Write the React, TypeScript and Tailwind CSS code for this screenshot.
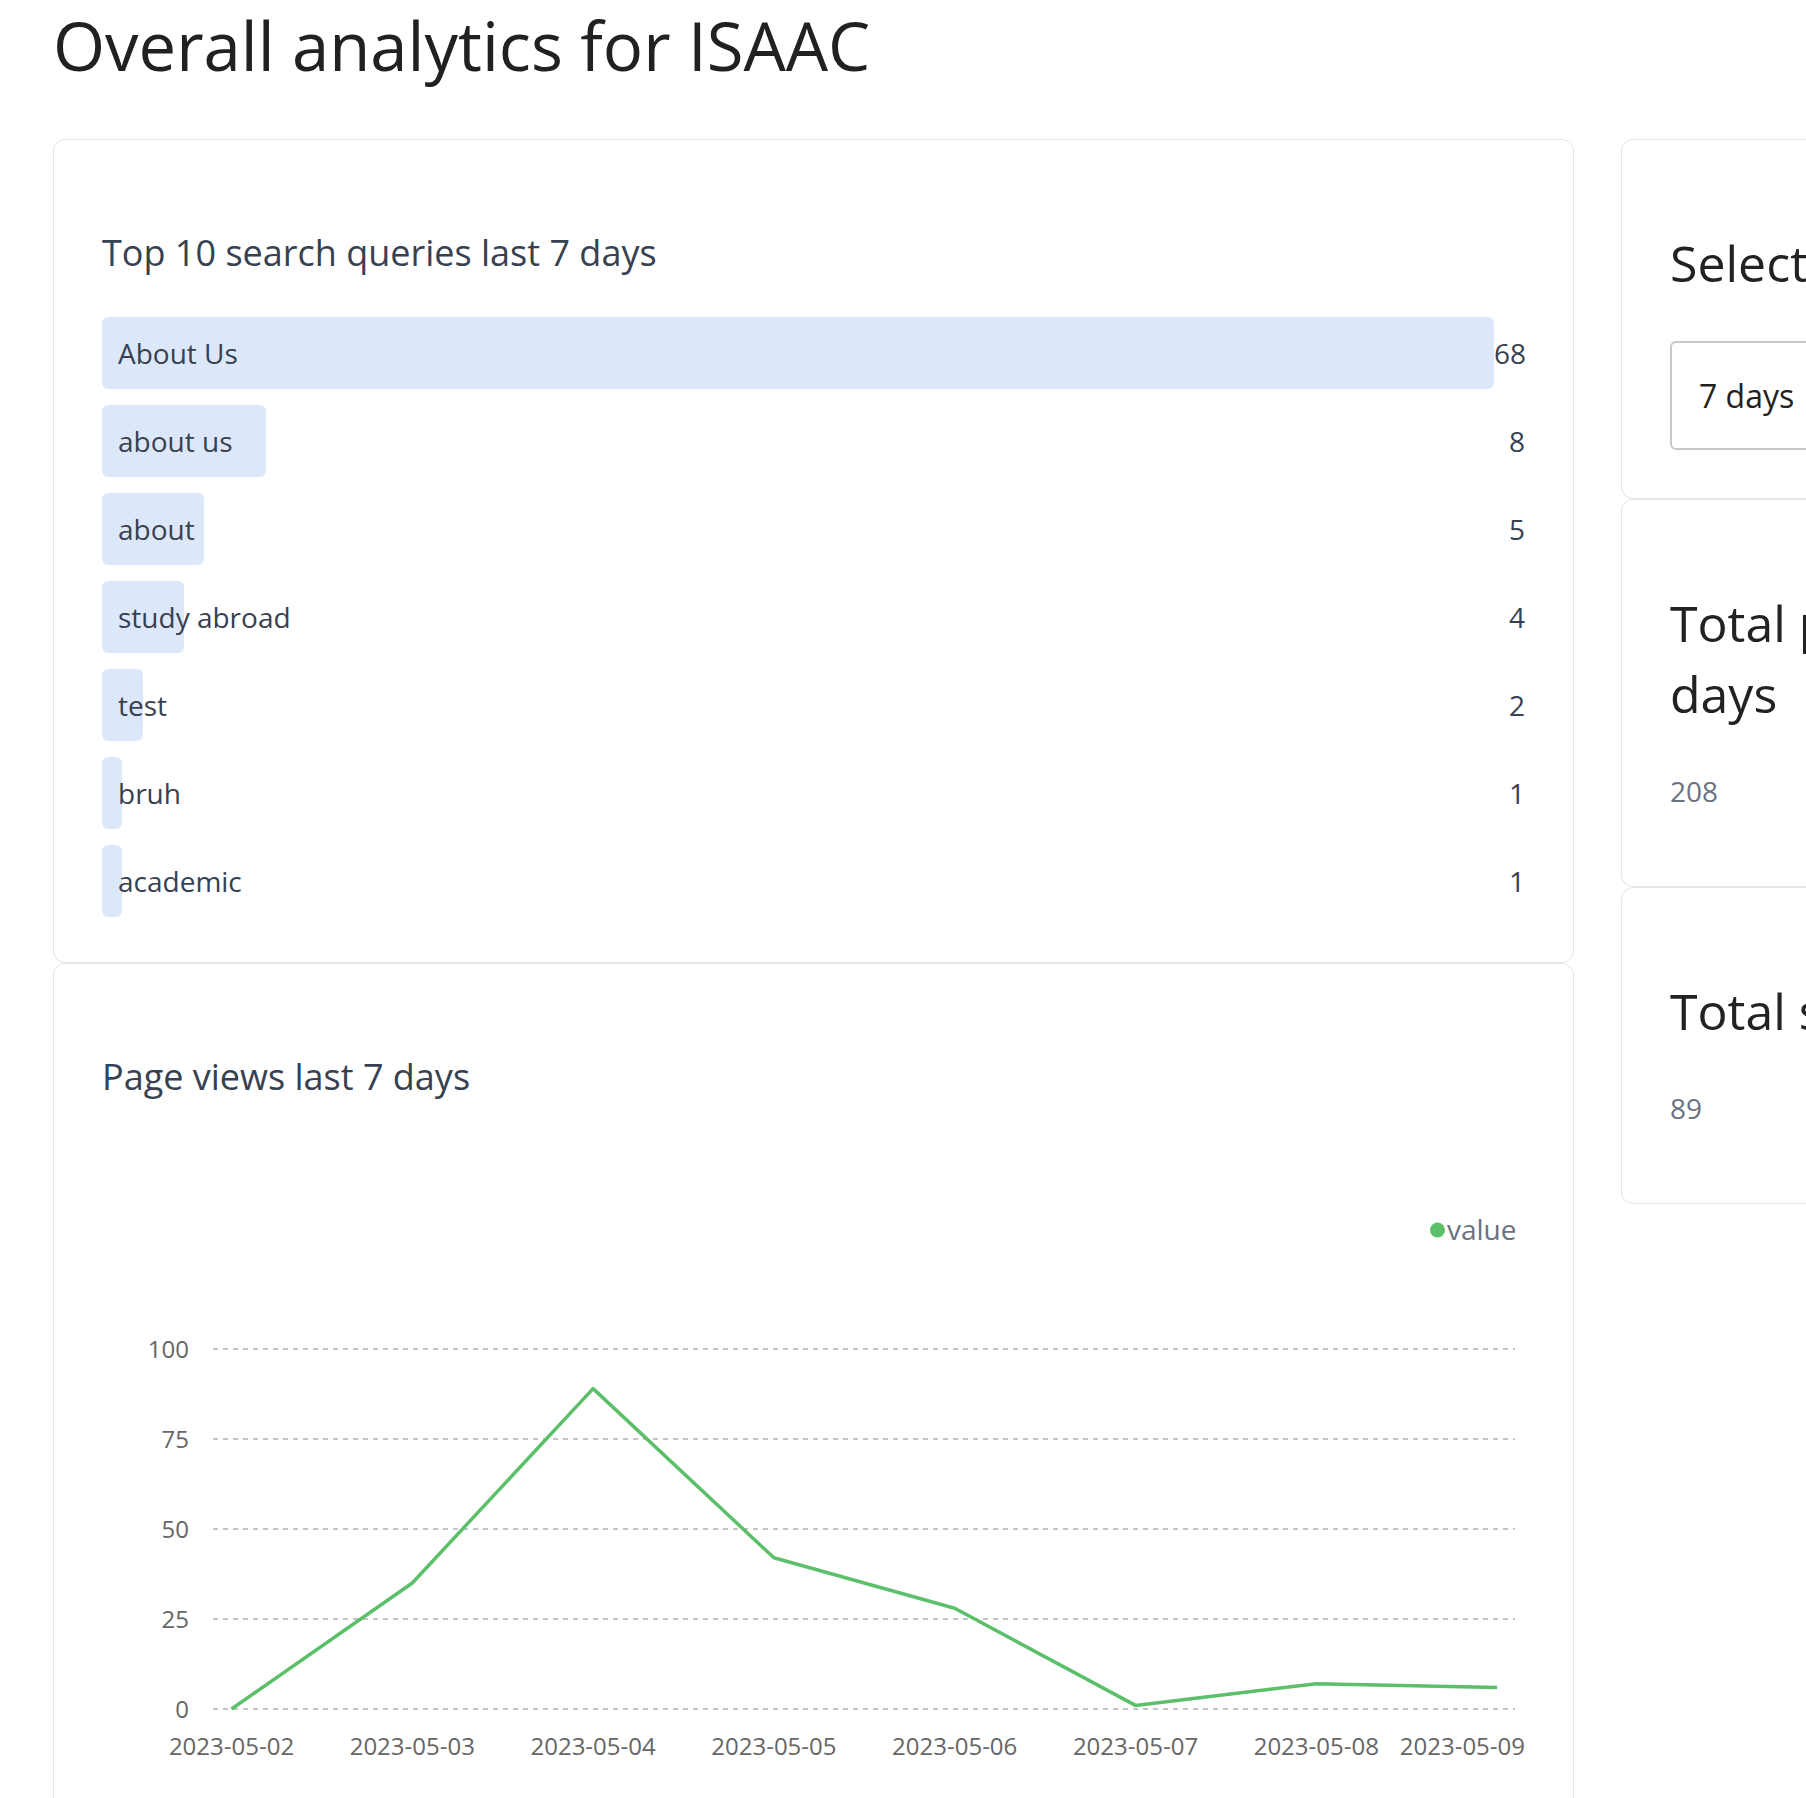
import React from 'react'

const queries: [string, number][] = [
  ['About Us', 68],
  ['about us', 8],
  ['about', 5],
  ['study abroad', 4],
  ['test', 2],
  ['bruh', 1],
  ['academic', 1],
]

const views: [string, number][] = [
  ['2023-05-02', 0],
  ['2023-05-03', 35],
  ['2023-05-04', 89],
  ['2023-05-05', 42],
  ['2023-05-06', 28],
  ['2023-05-07', 1],
  ['2023-05-08', 7],
  ['2023-05-09', 6],
]

function TopQueries() {
  const max = Math.max(...queries.map((q) => q[1]))
  return (
    <div className="flex flex-col gap-4 mt-[37px]">
      {queries.map(([label, count]) => (
        <div key={label} className="flex items-center">
          <div className="flex-1">
            <div
              className="h-[72px] rounded-md bg-[#dce8fa] flex items-center pl-4 whitespace-nowrap"
              style={{ width: `${(count / max) * 100}%` }}
            >
              {label}
            </div>
          </div>
          <span className="w-[31px] text-right">{count}</span>
        </div>
      ))}
    </div>
  )
}

function ViewsChart() {
  const x0 = 129.5
  const step = 180.8
  const base = 605
  const unit = 3.6
  const pts = views.map(([, v], i) => `${x0 + i * step},${base - v * unit}`).join(' ')
  return (
    <svg width="1423" height="720" className="block" style={{ fontFamily: '"Open Sans", sans-serif' }}>
      <circle cx="1335.5" cy="126" r="7.5" fill="#5cbf6a" />
      <text x="1345" y="136" fontSize="28" fill="#6b7280">value</text>
      {[100, 75, 50, 25, 0].map((t) => {
        const y = base - t * unit
        return (
          <g key={t}>
            <line x1="111" x2="1413" y1={y} y2={y} stroke="#c4c4c4" strokeWidth="2" strokeDasharray="5 5" />
            <text x="87" y={y + 8.5} fontSize="24" fill="#666666" textAnchor="end">{t}</text>
          </g>
        )
      })}
      {views.map(([d], i) => {
        const last = i === views.length - 1
        return (
          <text
            key={d}
            x={last ? 1423 : x0 + i * step}
            y="651"
            fontSize="24"
            fill="#666666"
            textAnchor={last ? 'end' : 'middle'}
          >
            {d}
          </text>
        )
      })}
      <polyline points={pts} fill="none" stroke="#5cbf6a" strokeWidth="3.5" strokeLinejoin="round" />
    </svg>
  )
}

function StatCard({ title, value }: { title: string; value: string }) {
  return (
    <div className="rounded-xl border border-[#e4e5e9] bg-white px-12 pt-[88px] pb-[48px]">
      <h3 className="text-[50px] leading-[71px] font-medium text-[#222222]">{title}</h3>
      <p className="mt-[40px] mb-[26px] text-[28px] leading-[42px] text-gray-500">{value}</p>
    </div>
  )
}

export default function App() {
  return (
    <div className="w-[1806px] min-h-screen overflow-hidden bg-white pl-[53px] pb-10" style={{ fontFamily: '"Open Sans", sans-serif' }}>
      <h1 className="pt-[5px] text-[67px] leading-[80px] text-[#212121] whitespace-nowrap">Overall analytics for ISAAC</h1>
      <div className="flex gap-[47px] mt-[54px]">
        <div className="w-[1521px] shrink-0 flex flex-col">
          <div className="rounded-xl border border-[#e4e5e9] bg-white px-12 pt-[86px] pb-[45px] text-[28px] text-[#374151]">
            <h2 className="text-[36px] leading-[54px]">Top 10 search queries last 7 days</h2>
            <TopQueries />
          </div>
          <div className="rounded-xl border border-[#e4e5e9] bg-white px-12 pt-[86px] pb-12 text-[#374151]">
            <h2 className="text-[36px] leading-[54px]">Page views last 7 days</h2>
            <ViewsChart />
          </div>
        </div>
        <div className="w-[728px] shrink-0 flex flex-col">
          <div className="rounded-xl border border-[#e4e5e9] bg-white px-12 pt-[88px] pb-[48px]">
            <h3 className="text-[50px] leading-[71px] font-medium text-[#222222]">Select time range</h3>
            <div className="mt-[42px] h-[109px] rounded-md border-2 border-[#c8c8c8] flex items-center px-[27px] text-[32px] text-[#222222]">
              7 days
            </div>
          </div>
          <StatCard title="Total page views last 7 days" value="208" />
          <StatCard title="Total searches last 7 days" value="89" />
        </div>
      </div>
    </div>
  )
}
